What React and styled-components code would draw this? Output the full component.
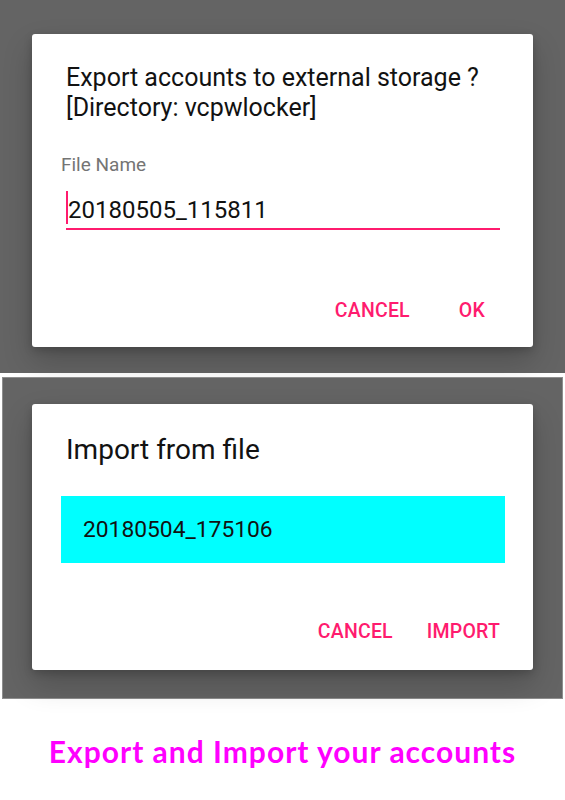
import React from "react";
import styled, { createGlobalStyle } from "styled-components";

const PINK = "#ff1b6e";

const Global = createGlobalStyle`
  html, body { margin: 0; padding: 0; background: #ffffff; }
  body { font-family: Roboto, "Noto Sans", sans-serif; }
  * { box-sizing: border-box; }
`;

const Page = styled.div`
  width: 565px;
  display: flex;
  flex-direction: column;
`;

const Backdrop = styled.section`
  background: #646464;
  display: flex;
  flex-direction: column;
  ${(p) =>
    p.$framed
      ? `
    margin: 4px 2px 0 2px;
    border: 1px solid #8e8e8e;
    padding: 26px 29px 28px 29px;
  `
      : `
    height: 373px;
    padding: 34px 32px 0 32px;
  `}
`;

const Dialog = styled.div`
  width: 501px;
  background: #ffffff;
  border-radius: 3px;
  box-shadow: 0 14px 30px rgba(0, 0, 0, 0.2), 0 3px 8px rgba(0, 0, 0, 0.18);
  display: flex;
  flex-direction: column;
  padding: ${(p) => p.$pad};
`;

const Title = styled.h2`
  margin: 0;
  padding-left: ${(p) => p.$indent || 34}px;
  font-family: Roboto, sans-serif;
  font-weight: 400;
  font-size: ${(p) => p.$size}px;
  line-height: ${(p) => p.$lh}px;
  color: #121212;
`;

const Label = styled.div`
  margin: 31px 0 0 29px;
  font-size: 19px;
  line-height: 22px;
  color: #747474;
`;

const Field = styled.div`
  position: relative;
  margin: 19px 0 0 34px;
  width: 434px;
  padding: 0 0 3px 2px;
  border-bottom: 2px solid ${PINK};
  font-size: 24px;
  line-height: 30px;
  color: #111;
  &::before {
    content: "";
    position: absolute;
    left: 0;
    top: -4px;
    width: 2px;
    height: 33px;
    background: ${PINK};
  }
`;

const Actions = styled.div`
  display: flex;
  justify-content: flex-end;
  gap: ${(p) => p.$gap}px;
  margin-top: ${(p) => p.$top}px;
  padding-right: ${(p) => p.$right}px;
`;

const ActionButton = styled.span`
  font-family: Roboto, sans-serif;
  font-weight: 500;
  font-size: 19.5px;
  line-height: 20px;
  letter-spacing: 0.2px;
  color: ${PINK};
  text-transform: uppercase;
`;

const FileItem = styled.div`
  margin: 29px 0 0 29px;
  width: 444px;
  height: 67px;
  background: #00ffff;
  display: flex;
  align-items: center;
  padding-left: 22px;
  font-size: 22.8px;
  color: #111;
`;

const Caption = styled.div`
  margin-top: 34px;
  text-align: center;
  font-family: Lato, "Open Sans", sans-serif;
  font-weight: 700;
  font-size: 30px;
  line-height: 36px;
  letter-spacing: 1px;
  color: #ff00ff;
`;

export default function App() {
  return (
    <Page>
      <Global />
      <Backdrop>
        <Dialog $pad="29px 0 26px 0">
          <Title $size={25} $lh={30}>
            Export accounts to external storage ?
            <br />
            [Directory: vcpwlocker]
          </Title>
          <Label>File Name</Label>
          <Field>20180505_115811</Field>
          <Actions $gap={49} $top={71} $right={48}>
            <ActionButton>Cancel</ActionButton>
            <ActionButton>OK</ActionButton>
          </Actions>
        </Dialog>
      </Backdrop>
      <Backdrop $framed>
        <Dialog $pad="29px 0 28px 0">
          <Title $size={28} $lh={34}>
            Import from file
          </Title>
          <FileItem>20180504_175106</FileItem>
          <Actions $gap={34} $top={59} $right={33}>
            <ActionButton>Cancel</ActionButton>
            <ActionButton>Import</ActionButton>
          </Actions>
        </Dialog>
      </Backdrop>
      <Caption>Export and Import your accounts</Caption>
    </Page>
  );
}
